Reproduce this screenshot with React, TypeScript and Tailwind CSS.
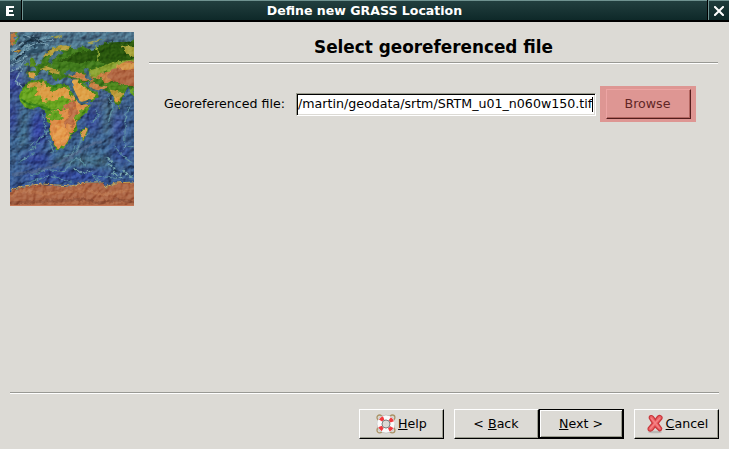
import type { ReactNode } from 'react';

function ReliefMap() {
  return (
    <svg width="124" height="174" viewBox="0 0 124 174" className="block shrink-0" aria-label="Relief map">
      <defs>
        <linearGradient id="sea" x1="0" y1="0" x2="0" y2="1">
          <stop offset="0" stopColor="#4c728a" />
          <stop offset=".2" stopColor="#4c7289" />
          <stop offset=".36" stopColor="#3c5e88" />
          <stop offset=".55" stopColor="#385a8a" />
          <stop offset=".7" stopColor="#3c628a" />
          <stop offset="1" stopColor="#324e90" />
        </linearGradient>
        <filter id="rough" x="-5%" y="-5%" width="110%" height="110%" colorInterpolationFilters="sRGB">
          <feTurbulence type="fractalNoise" baseFrequency=".25" numOctaves="3" seed="7" result="n" />
          <feDisplacementMap in="SourceGraphic" in2="n" scale="4" xChannelSelector="R" yChannelSelector="G" />
        </filter>
        <filter id="mottle" x="-5%" y="-5%" width="110%" height="110%" colorInterpolationFilters="sRGB">
          <feTurbulence type="fractalNoise" baseFrequency=".18" numOctaves="3" seed="22" result="n" />
          <feDisplacementMap in="SourceGraphic" in2="n" scale="11" xChannelSelector="R" yChannelSelector="G" />
          <feGaussianBlur stdDeviation=".5" />
        </filter>
        <filter id="soft"><feGaussianBlur stdDeviation="4" /></filter>
        <filter id="seaRelief" x="0" y="0" width="100%" height="100%" colorInterpolationFilters="sRGB">
          <feTurbulence type="fractalNoise" baseFrequency=".11 .13" numOctaves="5" seed="14" result="t" />
          <feDiffuseLighting in="t" surfaceScale="3" diffuseConstant=".69" lightingColor="#fff">
            <feDistantLight azimuth="225" elevation="48" />
          </feDiffuseLighting>
        </filter>
        <filter id="landRelief" x="0" y="0" width="100%" height="100%" colorInterpolationFilters="sRGB">
          <feTurbulence type="fractalNoise" baseFrequency=".2" numOctaves="4" seed="5" result="t" />
          <feDiffuseLighting in="t" surfaceScale="2" diffuseConstant=".67" lightingColor="#fff">
            <feDistantLight azimuth="225" elevation="52" />
          </feDiffuseLighting>
        </filter>
        <clipPath id="africa">
          <path d="M18 49L25 48L34 46L37 51L44 54L48 51L58 53L62 61L68 70L71 73L80 72L77 79L70 85L66 90L67 98L60 103L58 109L53 116L46 118L43 112L39 101L40 94L36 87L34 78L28 74L21 77L15 75L10 69L9 64L12 57Z" />
        </clipPath>
        <clipPath id="mapFrame"><rect width="124" height="174" /></clipPath>
      </defs>
      <g clipPath="url(#mapFrame)">
        <rect width="124" height="174" fill="url(#sea)" />
        <g filter="url(#soft)">
          <ellipse cx="28" cy="98" rx="8" ry="18" fill="#323f9b" />
          <ellipse cx="14" cy="95" rx="5" ry="22" fill="#416c80" />
          <ellipse cx="4" cy="50" rx="8" ry="15" fill="#364193" />
          <ellipse cx="3" cy="85" rx="5" ry="17" fill="#344193" />
          <ellipse cx="83" cy="87" rx="8" ry="14" fill="#354892" />
          <ellipse cx="100" cy="88" rx="7" ry="18" fill="#466e81" />
          <ellipse cx="107" cy="94" rx="5" ry="15" fill="#394797" />
          <ellipse cx="75" cy="130" rx="34" ry="6" fill="#426b80" />
          <ellipse cx="56" cy="143" rx="44" ry="5" fill="#2e419b" />
          <ellipse cx="27" cy="127" rx="15" ry="7" fill="#304298" />
          <ellipse cx="111" cy="122" rx="12" ry="10" fill="#334b91" />
          <ellipse cx="91" cy="68" rx="8" ry="8" fill="#425a7f" />
        </g>
        <rect width="124" height="174" filter="url(#seaRelief)" className="mix-blend-overlay" opacity=".6" />
        <g fill="none" filter="url(#rough)" strokeLinejoin="round" transform="translate(.5 .5)">
          <path d="M14 3L22 13L32 11L28 18L16 20L10 30" stroke="#31536a" strokeWidth="4" />
          <path d="M2 18L12 10L19 14L10 21L2 28M13 2L27 8L39 4M18 14L28 10L38 12M1 32L11 28L17 22M12 36L5 48L15 58M22 4L31 9L43 8M0 39L8 36L14 28" stroke="#7da4b5" strokeWidth="1.2" />
          <path d="M10 15L20 7L31 9M5 26L15 20M20 5L29 6" stroke="#1d3548" strokeWidth="2" />
          <path d="M40 120L43 119L36 103L32 81M19 113L30 106L39 97M20 118L29 110M58 125L66 119L72 105L79 101M76 133L66 125L53 139L36 137L20 143M65 113L61 122L53 124M103 113L114 125L121 130M82 89L88 84L85 78M98 90L102 74L97 62M114 116L115 83L120 73M117 114L123 114M18 150L41 143L61 150M88 149L82 143L107 146M8 130L24 120" stroke="#5b8ea0" strokeWidth="1.1" />
          <path d="M63 136L69 139L76 140L82 138M96 125L101 129L98 132L105 137L102 141L110 145L113 137L118 143L122 145" stroke="#76a6ad" strokeWidth="1.5" strokeDasharray="4 1" />
          <path d="M65 138L72 141M98 129L104 132L101 136L109 140L107 143" stroke="#203e66" strokeWidth="1.4" />
          <path d="M1 142L25 139L47 132L65 121L80 112L91 109" stroke="#51678b" strokeWidth="3" opacity=".7" />
        </g>
        <g filter="url(#rough)" transform="translate(.5 .5)">
          <path d="M31 28L38 19L46 14L59 13L64 17L72 14L82 18L92 12L96 9L99 13L108 10L117 11L125 6V53L121 58L117 55L113 63L109 73L106 73L100 60L94 58L86 57L78 51L70 49L65 46L54 45L49 48L42 39L48 45L45 48L37 39L30 38L26 44L21 46L17 44V39L26 38L24 33L31 31Z" fill="#407a1b" />
          <path d="M66 20L83 17L96 10L124 9L125 25L103 34L84 28L70 31L49 28Z" fill="#28560d" />
          <path d="M32 24L41 17L48 13L61 13L56 18L48 17L44 27L39 22L33 25Z" fill="#b7a03c" />
          <path d="M44 19L50 18L54 21L47 23L42 27L40 31L38 28Z" fill="#446d7c" />
          <path d="M28 37L37 34L46 38L50 42L43 41L36 38Z" fill="#b59c3c" />
          <path d="M17 40L25 40L24 45L19 45Z" fill="#d49a45" />
          <path d="M79 38L91 34L104 29L125 27V39L107 44L94 38L87 46L78 43Z" fill="#8ba331" />
          <path d="M54 42L67 40L80 44L92 46L94 52L104 47L112 52L125 54V37L110 34L101 39L92 40L83 46L78 54L86 58L98 55" fill="#c98146" />
          <path d="M102 37L115 29L125 28V54L108 51L96 45Z" fill="#b16642" />
          <path d="M104 34L113 30L125 30V36L114 38Z" fill="#d49549" />
          <path d="M111 12L125 15V25L116 22Z" fill="#a8a43a" />
          <path d="M87 29L88 18L84 14" fill="none" stroke="#91a936" strokeWidth="1.5" />
          <path d="M94 51L106 51L118 55L114 59L109 73L105 72L101 60Z" fill="#4c851b" />
          <path d="M99 57L108 59L113 61L107 71L103 66Z" fill="#bd9a39" />
          <path d="M103 64L109 65L107 71Z" fill="#df9b43" />
          <path d="M61 47L69 47L77 55L83 59L87 64L79 69L69 71L64 62Z" fill="#dea045" />
          <path d="M68 48L77 55L86 60L87 64L79 69" fill="none" stroke="#458a1d" strokeWidth="2.5" />
          <path d="M54 40L59 37L63 39L67 41L62 43L55 43ZM73 36L78 36L79 43L82 46L79 49L75 44Z" fill="#40697b" />
          <path d="M20 31L19 27L22 24L25 30L26 34L19 34ZM17 29L18 32L14 33Z" fill="#568a1e" />
          <path d="M0 0H8L4 5L5 11L0 15Z" fill="#b87440" />
          <path d="M5 1L8 5L3 11" fill="none" stroke="#508d32" strokeWidth="1.5" />
          <path d="M3 18L7 17L11 18L8 20L4 20Z" fill="#c0943e" />
          <path d="M78 10L88 7L95 7L87 9L80 12ZM40 5L47 3L52 3L47 6Z" fill="#9b9b4c" />
          <path d="M109 74L110 76L108 77ZM119 58L123 55L125 65L121 62Z" fill="#65a025" />
          <path d="M18 49L25 48L34 46L37 51L44 54L48 51L58 53L62 61L68 70L71 73L80 72L77 79L70 85L66 90L67 98L60 103L58 109L53 116L46 118L43 112L39 101L40 94L36 87L34 78L28 74L21 77L15 75L10 69L9 64L12 57Z" fill="#4f911b" />
          <path d="M71 99L76 94L77 98L73 107L70 105Z" fill="#d8964a" stroke="#569126" strokeWidth="1" />
        </g>
        <g clipPath="url(#africa)">
          <g filter="url(#mottle)">
            <path d="M39 82L44 78L54 79L61 67L79 72L71 84L65 90L64 100L57 112L48 117L43 111L40 98Z" fill="#dc8d48" />
            <path d="M17 51L33 49L38 55L33 58L24 57L17 54Z" fill="#c7943f" />
            <path d="M8 58L25 57L31 61L42 59L46 65L51 62L61 69L59 78L48 77L38 76L29 71L9 74Z" fill="#69a51f" />
            <path d="M26 56L38 54L45 59L55 55L63 65L62 70L53 65L44 67L32 68L27 63Z" fill="#dc9c45" />
            <path d="M39 81L46 79L52 84L48 89L41 87Z" fill="#65a321" />
            <path d="M62 67L66 71L67 80L62 93L55 97L54 91L61 83L54 76Z" fill="#bd7046" />
            <path d="M65 83L72 77L80 74L73 84L67 91Z" fill="#659b1f" />
            <path d="M47 93L57 97L56 108L48 112L43 104Z" fill="#e59d4e" />
          </g>
          <path d="M11 67L18 72L25 73L34 76L40 78M36 48L39 53L47 55" fill="none" stroke="#35801a" strokeWidth="2" />
        </g>
        <g filter="url(#rough)">
          <path d="M-2 160L12 155L32 153L59 155L74 151L93 151L95 156L106 151L127 150V178H-2Z" fill="#ac6544" />
          <path d="M1 158L13 154L32 152L61 154L76 150L93 150M94 156L105 151L124 150" fill="none" stroke="#c9a555" strokeWidth="1.2" />
          <path d="M0 163L15 158L33 162L55 160L75 158L92 163L125 157" fill="none" stroke="#b8724c" strokeWidth="3" />
          <path d="M0 171L24 170L35 169L50 169L72 167L90 171L106 168L125 170" fill="none" stroke="#965439" strokeWidth="3" />
        </g>
        <path d="M60 52L64 60L69 70L72 71L81 68" fill="none" stroke="#3d6477" strokeWidth="2" />
        <path d="M76 53L82 58L88 59" fill="none" stroke="#466b79" strokeWidth="1.5" />
        <rect width="124" height="174" filter="url(#landRelief)" className="mix-blend-soft-light" opacity=".7" />
        <rect y="173" width="124" height="1" fill="#c57756" />
      </g>
    </svg>
  );
}

function HelpIcon() {
  return (
    <svg width="20" height="20" viewBox="0 0 20 20" className="shrink-0">
      <g fill="none" stroke="#aa9366" strokeWidth="1.3">
        <circle cx="3.6" cy="3.6" r="2.6" />
        <circle cx="16.3" cy="3.6" r="2.6" />
        <circle cx="3.6" cy="16.3" r="2.6" />
        <circle cx="16.3" cy="16.3" r="2.6" />
      </g>
      <circle cx="10" cy="10" r="6.5" fill="none" stroke="#aaa" strokeWidth="5.4" />
      <circle cx="10" cy="10" r="6.5" fill="none" stroke="#fafafa" strokeWidth="4.6" />
      <circle cx="10" cy="10" r="6.5" fill="none" stroke="#f23a3e" strokeWidth="3.8" strokeDasharray="3.8 6.41" strokeDashoffset="-3.205" />
      <circle cx="10" cy="10" r="4" fill="#dcdad5" stroke="#777" strokeWidth=".9" />
    </svg>
  );
}

function CancelIcon() {
  return (
    <svg width="20" height="20" viewBox="0 0 20 20" className="shrink-0">
      <ellipse cx="9" cy="18" rx="7" ry="1.3" fill="#bbb9b5" />
      <path d="M3.3 4.3Q2.8 1.8 5.2 1.5Q7 1.4 9.4 5.6Q11.8 1.1 14.2 1.5Q17 2.6 15.8 5L12.2 9.3L15.8 14.3Q15.6 17 13.3 16.8L9 12.8Q6.5 17.4 4.2 17.1Q1.2 16.5 2.3 13.7L6.3 9.1Z" fill="#ee6164" stroke="#c7353a" strokeWidth="1.2" />
      <path d="M5 4L9.2 9L13.6 14.3M14 4L9.2 9L4.2 14.7" stroke="#f48285" strokeWidth="1.3" fill="none" />
    </svg>
  );
}

const raised = 'flex h-[30px] items-center justify-center border-t border-l border-r border-b border-t-white border-l-white border-r-black border-b-black shadow-[inset_-1px_-1px_0_#9b9c8f]';

function Button({ children, className = '' }: { children: ReactNode; className?: string }) {
  return <button className={`${raised} ${className}`}>{children}</button>;
}

function Rule() {
  return <div className="h-[2px] border-t border-b border-t-[#999994] border-b-white" />;
}

export default function App() {
  return (
    <div className="flex h-[449px] w-[729px] flex-col overflow-hidden bg-[#dcdad5] font-['DejaVu_Sans',sans-serif] text-[12.63px] leading-4 text-black">
      <header className="flex h-[22px] shrink-0 border-b-2 border-black bg-black text-white">
        <div className="flex w-[21px] items-center justify-center border-t border-[#6f9290] bg-linear-to-b from-[#284846] to-[#173332] pr-[2px]">
          <svg width="8" height="10" viewBox="0 0 8 10" shapeRendering="crispEdges"><path d="M0 0h8v2H3v2h4v2H3v2h5v2H0z" fill="white" /></svg>
        </div>
        <div className="ml-px flex flex-1 items-center justify-center border-t border-l border-[#6f9290] bg-linear-to-b from-[#223f3f] to-[#0e2929] pr-px text-[12.55px] font-bold">Define new GRASS Location</div>
        <div className="ml-px flex w-[21px] items-center justify-center border-t border-l border-[#6f9290] bg-linear-to-b from-[#1e3b3b] to-[#0e2929]">
          <svg width="10" height="10" viewBox="0 0 10 10"><path d="M1 1L9 9M9 1L1 9" stroke="white" strokeWidth="2" strokeLinecap="square" /></svg>
        </div>
      </header>
      <main className="flex h-[370px] shrink-0 gap-[15px] pt-[10px] pr-[11px] pl-[10px]">
        <ReliefMap />
        <section className="min-w-0 flex-1">
          <h1 className="flex h-[30px] items-center justify-center text-[16.85px] leading-5 font-bold">Select georeferenced file</h1>
          <Rule />
          <div className="flex items-center pt-[22px] pl-[15px]">
            <label className="w-[132px] whitespace-nowrap">Georeferenced file:</label>
            <div className="mr-[4px] flex h-[23px] w-[300px] items-center overflow-hidden border border-t-[#9b9c8f] border-r-white border-b-white border-l-[#9b9c8f] bg-white shadow-[inset_1px_1px_0_#000,inset_-1px_-1px_0_#dcdad5]">
              <span className="ml-px whitespace-nowrap">/martin/geodata/srtm/SRTM_u01_n060w150.tif</span>
              <span className="h-[15px] w-px shrink-0 bg-black" />
            </div>
            <div className="h-9 w-24 bg-[#de9693] pt-[3px] pl-[6px]">
              <button className="flex h-[30px] w-[85px] items-center justify-center border border-t-[#eda5a4] border-r-[#541d1d] border-b-[#541d1d] border-l-[#eda5a4] pr-[2px] text-[#612626] shadow-[inset_-1px_-1px_0_#b46661]">Browse</button>
            </div>
          </div>
        </section>
      </main>
      <footer className="pr-[10px] pl-[10px]">
        <Rule />
        <div className="flex justify-end pt-[15px]">
          <Button className="mr-[10px] w-[85px]"><HelpIcon /><span className="ml-[2px]"><u>H</u>elp</span></Button>
          <Button className="w-[85px] pr-px">&lt;&nbsp;<u>B</u>ack</Button>
          <button className="mr-[10px] flex h-[30px] w-[85px] items-center justify-center border border-r-2 border-b-2 border-black shadow-[inset_1px_1px_0_#fff,inset_-1px_-1px_0_#9b9c8f]"><u>N</u>ext &gt;</button>
          <Button className="w-[85px] pl-px"><CancelIcon /><span><u>C</u>ancel</span></Button>
        </div>
      </footer>
    </div>
  );
}
